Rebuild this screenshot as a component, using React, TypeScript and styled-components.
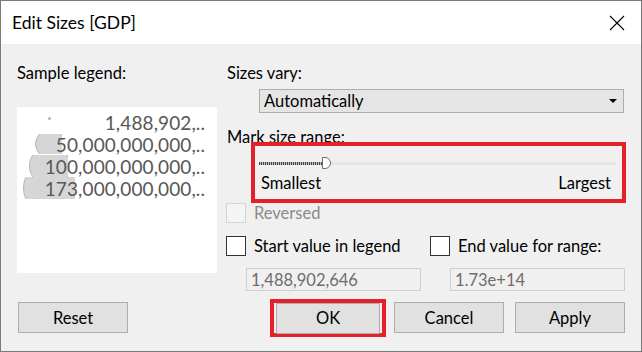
import styled, { createGlobalStyle } from "styled-components";

const GlobalStyle = createGlobalStyle`
  html, body {
    margin: 0;
    padding: 0;
    background: #f0f0f0;
  }
  body {
    font-family: Lato, "Noto Sans", sans-serif;
  }
`;

const Window = styled.div`
  width: 642px;
  height: 352px;
  box-sizing: border-box;
  border: 1px solid #7a7a7a;
  background: #f0f0f0;
  display: flex;
  flex-direction: column;
  color: #000;
  font-size: 16.5px;
`;

const TitleBar = styled.div`
  height: 43px;
  background: #fff;
  display: flex;
  align-items: center;
  justify-content: space-between;
  padding: 0 16px 0 11px;
  flex-shrink: 0;
`;

const Title = styled.div`
  font-size: 17.5px;
  margin-top: -1px;
`;

const Body = styled.div`
  display: grid;
  grid-template-columns: 200px 1fr;
  column-gap: 9px;
  padding: 19px 15px 0 16px;
`;

const Label = styled.div<{ $indent?: number }>`
  line-height: 20px;
  height: 20px;
  padding-left: ${(p) => p.$indent ?? 0}px;
`;

const LeftCol = styled.div`
  display: flex;
  flex-direction: column;
`;

const LegendBox = styled.div`
  margin-top: 24px;
  height: 166px;
  background: #fff;
  padding-top: 4px;
  box-sizing: border-box;
`;

const LegendRow = styled.div`
  position: relative;
  height: 22px;
  display: flex;
  align-items: center;
  justify-content: flex-end;
  padding-right: 12px;
  color: #585858;
  font-size: 19px;
  letter-spacing: 0.1px;
`;

const LegendText = styled.span`
  position: relative;
  z-index: 1;
`;

const MarkClip = styled.div<{ $left: number; $w: number; $h: number }>`
  position: absolute;
  left: ${(p) => p.$left}px;
  top: 50%;
  width: ${(p) => p.$w}px;
  height: ${(p) => p.$h}px;
  transform: translateY(-50%);
  overflow: hidden;
`;

const MarkCircle = styled.div<{ $d: number; $h: number }>`
  position: absolute;
  left: 0;
  top: ${(p) => (p.$h - p.$d) / 2}px;
  width: ${(p) => p.$d}px;
  height: ${(p) => p.$d}px;
  box-sizing: border-box;
  border-radius: 50%;
  background: #d6d6d6;
  border: 1px solid #b8b8b8;
`;

const Dot = styled.div`
  position: absolute;
  left: 31px;
  top: 6px;
  width: 3px;
  height: 3px;
  border-radius: 50%;
  background: #b4b4b4;
`;

const RightCol = styled.div`
  display: flex;
  flex-direction: column;
`;

const Select = styled.div`
  margin: 6px 2px 0 33px;
  height: 24px;
  box-sizing: border-box;
  border: 1px solid #adadad;
  background: #e5e5e5;
  display: flex;
  align-items: center;
  justify-content: space-between;
  padding: 0 6px 0 4px;
`;

const Arrow = styled.div`
  width: 0;
  height: 0;
  border-left: 4px solid transparent;
  border-right: 4px solid transparent;
  border-top: 4px solid #000;
`;

const Section = styled.div`
  margin-top: 14px;
`;

const Highlight = styled.div`
  border: 4px solid #e5202a;
  box-sizing: border-box;
`;

const RangeBox = styled(Highlight)`
  margin: -5px 0 0 25px;
  height: 61px;
  display: flex;
  flex-direction: column;
  padding: 12px 6px 0 4px;
`;

const Track = styled.div`
  position: relative;
  height: 3px;
  background: #e6e6e6;
  margin-top: 4px;
`;

const TrackFill = styled.div`
  position: absolute;
  left: 0;
  top: 0;
  height: 3px;
  background: repeating-linear-gradient(90deg, #444 0 1px, #bdbdbd 1px 2px);
`;

const Thumb = styled.div`
  position: absolute;
  top: -5px;
  width: 9px;
  height: 12px;
  box-sizing: border-box;
  background: #fff;
  border: 1px solid #6f6f6f;
  border-radius: 0 7px 7px 0;
`;

const RangeLabels = styled.div`
  display: flex;
  justify-content: space-between;
  margin-top: 8px;
  padding: 0 5px 0 2px;
  line-height: 20px;
`;

const CheckRow = styled.div<{ $gap: number }>`
  display: flex;
  align-items: center;
  margin-top: ${(p) => p.$gap}px;
`;

const CheckItem = styled.label<{ $disabled?: boolean; $width?: number }>`
  display: flex;
  align-items: center;
  gap: 8px;
  width: ${(p) => (p.$width ? `${p.$width}px` : "auto")};
  color: ${(p) => (p.$disabled ? "#8a8a8a" : "#000")};
  line-height: 20px;
`;

const Box = styled.span<{ $disabled?: boolean }>`
  width: 20px;
  height: 20px;
  box-sizing: border-box;
  background: ${(p) => (p.$disabled ? "#f4f4f4" : "#fff")};
  border: 1px solid ${(p) => (p.$disabled ? "#d4d4d4" : "#333")};
  flex-shrink: 0;
`;

const InputRow = styled.div`
  display: flex;
  margin-top: 12px;
  padding-left: 20px;
  gap: 29px;
`;

const Input = styled.div`
  width: 175px;
  height: 23px;
  box-sizing: border-box;
  border: 1px solid #cfcfcf;
  background: #f0f0f0;
  color: #6d6d6d;
  display: flex;
  align-items: center;
  padding-left: 4px;
`;

const Footer = styled.div`
  display: flex;
  align-items: flex-start;
  padding: 0 16px 0 17px;
  margin-top: 11px;
`;

const Button = styled.div<{ $w?: number }>`
  width: ${(p) => p.$w ?? 110}px;
  height: 31px;
  box-sizing: border-box;
  border: 1px solid #adadad;
  background: #e1e1e1;
  display: flex;
  align-items: center;
  justify-content: center;
`;

const Spacer = styled.div`
  flex: 1;
`;

const OkFrame = styled(Highlight)`
  padding: 0 2px;
  margin: -3px 8px 0 0;
  height: 38px;
  display: flex;
  align-items: center;
`;

const ButtonGroup = styled.div`
  display: flex;
  gap: 11px;
`;

const legend = [
  { text: "1,488,902,..", mark: null },
  { text: "50,000,000,000,..", mark: { left: 18, w: 27, h: 20, d: 30 } },
  { text: "100,000,000,000,..", mark: { left: 12, w: 39, h: 22, d: 42 } },
  { text: "173,000,000,000,..", mark: { left: 6, w: 52, h: 22, d: 56 } },
];

const App: React.FC = () => {
  return (
    <>
      <GlobalStyle />
      <Window>
        <TitleBar>
          <Title>Edit Sizes [GDP]</Title>
          <svg width="16" height="16" viewBox="0 0 16 16">
            <path d="M1 1 L15 15 M15 1 L1 15" stroke="#000" strokeWidth="1.1" />
          </svg>
        </TitleBar>
        <Body>
          <LeftCol>
            <Label>Sample legend:</Label>
            <LegendBox>
              {legend.map((row) => (
                <LegendRow key={row.text}>
                  {row.mark ? (
                    <MarkClip $left={row.mark.left} $w={row.mark.w} $h={row.mark.h}>
                      <MarkCircle $d={row.mark.d} $h={row.mark.h} />
                    </MarkClip>
                  ) : (
                    <Dot />
                  )}
                  <LegendText>{row.text}</LegendText>
                </LegendRow>
              ))}
            </LegendBox>
          </LeftCol>
          <RightCol>
            <Label $indent={1}>Sizes vary:</Label>
            <Select>
              <span>Automatically</span>
              <Arrow />
            </Select>
            <Section>
              <Label $indent={1}>Mark size range:</Label>
            </Section>
            <RangeBox>
              <Track>
                <TrackFill style={{ width: 63 }} />
                <Thumb style={{ left: 63 }} />
              </Track>
              <RangeLabels>
                <span>Smallest</span>
                <span>Largest</span>
              </RangeLabels>
            </RangeBox>
            <CheckRow $gap={0}>
              <CheckItem $disabled>
                <Box $disabled />
                Reversed
              </CheckItem>
            </CheckRow>
            <CheckRow $gap={13}>
              <CheckItem $width={204}>
                <Box />
                Start value in legend
              </CheckItem>
              <CheckItem>
                <Box />
                End value for range:
              </CheckItem>
            </CheckRow>
            <InputRow>
              <Input>1,488,902,646</Input>
              <Input>1.73e+14</Input>
            </InputRow>
          </RightCol>
        </Body>
        <Footer>
          <Button>Reset</Button>
          <Spacer />
          <OkFrame>
            <Button $w={104}>OK</Button>
          </OkFrame>
          <ButtonGroup>
            <Button>Cancel</Button>
            <Button>Apply</Button>
          </ButtonGroup>
        </Footer>
      </Window>
    </>
  );
};

export default App;
